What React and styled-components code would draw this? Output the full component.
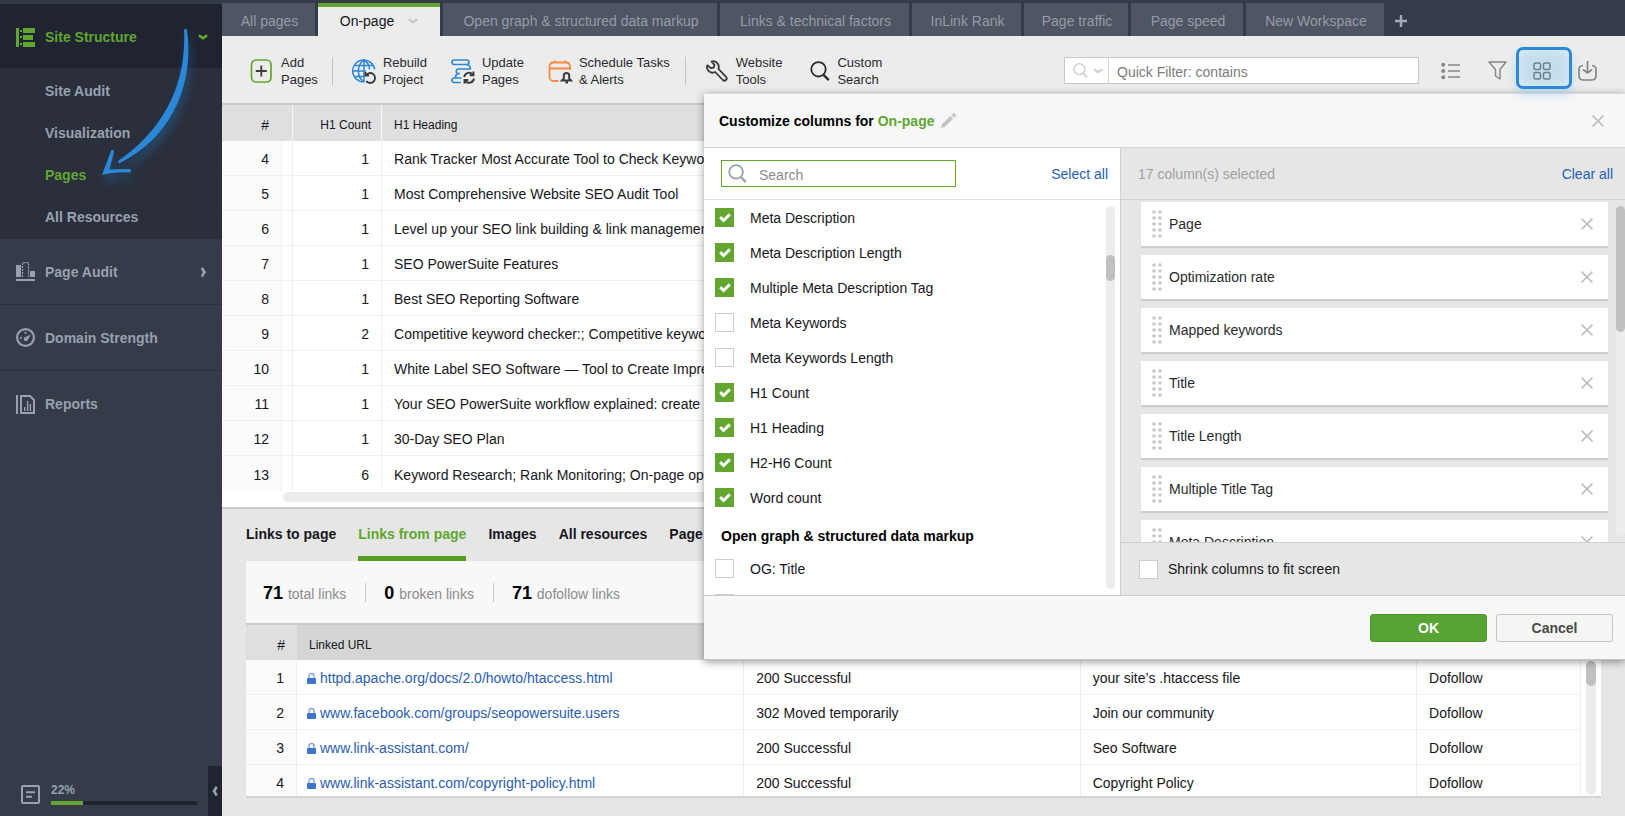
import React, { useState } from 'react';
import styled, { createGlobalStyle, css } from 'styled-components';

const TABS = [
  { label: 'All pages', width: 93 },
  { label: 'On-page', width: 122 },
  { label: 'Open graph & structured data markup', width: 274 },
  { label: 'Links & technical factors', width: 189 },
  { label: 'InLink Rank', width: 109 },
  { label: 'Page traffic', width: 104 },
  { label: 'Page speed', width: 112 },
  { label: 'New Workspace', width: 138 },
];

const PAGES = [
  [4, 1, 'Rank Tracker Most Accurate Tool to Check Keyword'],
  [5, 1, 'Most Comprehensive Website SEO Audit Tool'],
  [6, 1, 'Level up your SEO link building & link management'],
  [7, 1, 'SEO PowerSuite Features'],
  [8, 1, 'Best SEO Reporting Software'],
  [9, 2, 'Competitive keyword checker:; Competitive keyword'],
  [10, 1, 'White Label SEO Software — Tool to Create Impressive'],
  [11, 1, 'Your SEO PowerSuite workflow explained: create'],
  [12, 1, '30-Day SEO Plan'],
  [13, 6, 'Keyword Research; Rank Monitoring; On-page optimization'],
];

const LINKS = [
  ['httpd.apache.org/docs/2.0/howto/htaccess.html', '200 Successful', 'your site’s .htaccess file'],
  ['www.facebook.com/groups/seopowersuite.users', '302 Moved temporarily', 'Join our community'],
  ['www.link-assistant.com/', '200 Successful', 'Seo Software'],
  ['www.link-assistant.com/copyright-policy.html', '200 Successful', 'Copyright Policy'],
];

const COLUMNS = [
  ['Meta Description', true],
  ['Meta Description Length', true],
  ['Multiple Meta Description Tag', true],
  ['Meta Keywords', false],
  ['Meta Keywords Length', false],
  ['H1 Count', true],
  ['H1 Heading', true],
  ['H2-H6 Count', true],
  ['Word count', true],
];

const SELECTED = [
  'Page',
  'Optimization rate',
  'Mapped keywords',
  'Title',
  'Title Length',
  'Multiple Title Tag',
  'Meta Description',
];

/* ---------- icons ---------- */

const StructureIcon = () => (
  <svg width="19" height="19" viewBox="0 0 19 19" fill="currentColor">
    <path d="M0 0h3v19H0zM4 2h2v2H4zM4 8h2v2H4zM4 15h2v2H4zM7 0h12v5H7zM7 7h10v5H7zM7 14h12v5H7z" />
  </svg>
);

const AuditIcon = () => (
  <svg width="19" height="19" viewBox="0 0 19 19" fill="currentColor">
    <path d="M0 3h5v12H0zM14 9h5v6h-5zM0 17h19v2H0z" />
    <path d="M6.5 15V.7h6V15" fill="none" stroke="currentColor" strokeWidth="1.2" strokeDasharray="2 1" />
  </svg>
);

const GaugeIcon = () => (
  <svg width="19" height="19" viewBox="0 0 19 19" fill="currentColor">
    <circle cx="9.5" cy="9.5" r="8.4" fill="none" stroke="currentColor" strokeWidth="2.2" />
    <path d="M15 6.6L11.4 12.4a2.2 2.2 0 0 1-3.2-3z" />
    <circle cx="5" cy="9.8" r="1.1" />
    <circle cx="9.5" cy="4.8" r="1.1" />
  </svg>
);

const ReportIcon = () => (
  <svg width="19" height="19" viewBox="0 0 19 19" fill="none" stroke="currentColor">
    <path d="M1 0v19" strokeWidth="2" />
    <path d="M5 1h9l4 4v13H5z" strokeWidth="2" />
    <path d="M8.7 12v4M11.6 6v10M14.4 9v7" strokeWidth="1.4" />
  </svg>
);

const TaskIcon = () => (
  <svg width="19" height="19" viewBox="0 0 19 19" fill="none" stroke="currentColor" strokeWidth="2">
    <rect x="1" y="1" width="17" height="17" rx="1" />
    <path d="M5 7.2h9M5 11.8h6" />
  </svg>
);

const Chevron = ({ d = 'M.8 1.3Q3.500 2.800 5 4.200 6.500 2.800 9.200 1.300', width = 2.6 }) => (
  <svg width="10" height="10" viewBox="0 -2 10 10" fill="none" stroke="currentColor" strokeWidth={width}>
    <path d={d} />
  </svg>
);

const AddIcon = () => (
  <svg width="24" height="24" viewBox="0 0 24 24" fill="none">
    <rect x="1.5" y="1" width="19.500" height="22" rx="4.5" stroke="#63a62f" strokeWidth="1.700" />
    <path d="M11.3 6.5v11M5.800 12h11" stroke="#3c3c3c" strokeWidth="1.900" />
  </svg>
);

const GlobeIcon = () => (
  <svg width="24" height="24" viewBox="0 0 24 24" fill="none">
    <g stroke="#2b88d8" strokeWidth="1.500">
      <path d="M12 23A11 11 0 1 1 22.6 10.5" />
      <path d="M12 23C4.5 18 4.500 6 12 1c3.800 2.500 5.500 6 5.500 9.500M12 1v22M1.200 12H14M2.800 6.500h18.400M2.800 17.500H12" />
    </g>
    <path d="M13.500 13v3.500H17M13.800 16.400a5 5 0 1 1 .4 5.800" stroke="#3c3c3c" strokeWidth="1.900" />
  </svg>
);

const UpdateIcon = () => (
  <svg width="24" height="24" viewBox="0 0 24 24" fill="none">
    <g stroke="#2b88d8" strokeWidth="1.600">
      <rect x="1" y="1" width="17" height="4.500" rx="2.200" />
      <path d="M16 5.500q3.500 1 3.500 4.500M9 14.500H7.500a2.200 2.200 0 0 1 0-4.500H20M10.500 19H3.200a2.200 2.200 0 0 0 0 4.500H10M7 14.500q-2.500 1-2.500 4" />
    </g>
    <path
      d="M13.200 18a5 5 0 0 1 9-2.200M22.500 12.500v3.800h-3.800M23 19.500a5 5 0 0 1-9 2.200M13.500 24.500V21h3.800"
      stroke="#3c3c3c"
      strokeWidth="1.900"
    />
  </svg>
);

const ScheduleIcon = () => (
  <svg width="24" height="24" viewBox="0 0 24 24" fill="none">
    <path
      d="M10.500 22H5.500A4 4 0 0 1 1.500 18V7A4 4 0 0 1 5.500 3.500h12.500a4 4 0 0 1 4 3.500v4M1.500 9.500H22M6.500 1.500v3M17 1.500v3"
      stroke="#fb8b3d"
      strokeWidth="1.800"
    />
    <path d="M14 21.500l1.800-2v-2.800a2.700 2.700 0 0 1 5.400 0v2.800l1.800 2zM17.500 23.500h2.500" stroke="#3c3c3c" strokeWidth="2" />
  </svg>
);

const WrenchIcon = () => (
  <svg width="23" height="22" viewBox="0 0 23 22" fill="none" stroke="#3c3c3c" strokeWidth="1.800" strokeLinejoin="round">
    <path d="M5.500 1.600A5.600 5.600 0 0 1 12.500 8.800L20 16.800a2.200 2.200 0 0 1-3.200 3.200L9.200 12A5.600 5.600 0 0 1 1.300 5.300L5 8.200l2.800-.6.700-2.700z" />
  </svg>
);

const LensIcon = ({ size = 20, stroke = 1.8 }) => (
  <svg width={size} height={size} viewBox="0 0 20 20" fill="none" stroke="currentColor" strokeWidth={stroke}>
    <circle cx="8.500" cy="8.300" r="7.200" />
    <path d="M13.500 13.800l5.300 5.300" strokeWidth={stroke + 0.6} />
  </svg>
);

const ListIcon = () => (
  <svg width="19" height="18" viewBox="0 0 19 18" fill="none" stroke="currentColor" strokeWidth="1.500">
    <path d="M7 3h12M7 9h12M7 15h12" />
    <g fill="currentColor" stroke="none">
      <circle cx="2.200" cy="2.800" r="2" />
      <circle cx="2.200" cy="9" r="2" />
      <circle cx="2.200" cy="15.200" r="2" />
    </g>
  </svg>
);

const FunnelIcon = () => (
  <svg width="19" height="19" viewBox="0 0 19 19" fill="none" stroke="currentColor" strokeWidth="1.400" strokeLinejoin="round">
    <path d="M1 1h17l-6 7.500V18l-4.500-3V8.500z" />
  </svg>
);

const GridIcon = () => (
  <svg width="18" height="18" viewBox="0 0 18 18" fill="none" stroke="currentColor" strokeWidth="1.500">
    <rect x="1" y="1" width="6.500" height="6.500" rx="1.500" />
    <rect x="10.500" y="1" width="6.500" height="6.500" rx="1.500" />
    <rect x="1" y="10.500" width="6.500" height="6.500" rx="1.500" />
    <rect x="10.500" y="10.500" width="6.500" height="6.500" rx="1.500" />
  </svg>
);

const DownloadIcon = () => (
  <svg width="19" height="20" viewBox="0 0 19 20" fill="none" stroke="currentColor" strokeWidth="1.700">
    <path d="M5 4.500Q1 5 1 8v6.500Q1 19 5.500 19h8q4.500 0 4.500-4.500V8q0-3-4-3.500M9.500 0v11.500M5 8.500l4.500 3.500L14 8.500" />
  </svg>
);

const PencilIcon = () => (
  <svg width="15" height="15" viewBox="0 0 16 16" fill="#c4c4c4">
    <path d="M0 16l1-4L10 3l3 3-9 9zM11 2l1.600-1.600a1.300 1.300 0 0 1 1.800 0l1.200 1.200a1.300 1.300 0 0 1 0 1.800L14 5z" />
  </svg>
);

const CrossIcon = () => (
  <svg width="12" height="12" viewBox="0 0 12 12" fill="none" stroke="#bdbdbd" strokeWidth="1.500">
    <path d="M.6.6l10.800 10.800M11.400.6L.6 11.400" />
  </svg>
);

const LockIcon = () => (
  <svg width="9" height="11" viewBox="0 0 9 11">
    <path d="M2 5V3a2.500 2.500 0 0 1 5 0v2" fill="none" stroke="#7fa5dc" strokeWidth="1.400" />
    <rect y="5" width="9" height="6" rx="1" fill="#3f74c8" />
  </svg>
);

const GripIcon = () => (
  <svg width="10" height="28" viewBox="0 0 10 28" fill="#c6c8c8">
    {[2, 8, 14, 20, 26].map(y => (
      <React.Fragment key={y}>
        <circle cx="2" cy={y} r="1.800" />
        <circle cx="8" cy={y} r="1.800" />
      </React.Fragment>
    ))}
  </svg>
);

/* ---------- building blocks ---------- */

const CheckBox = ({ checked, onChange, name }) => (
  <CheckBoxWrap>
    <CheckInput type="checkbox" checked={checked} onChange={onChange} aria-label={name} />
    {checked && (
      <svg width="12" height="10" viewBox="0 0 12 10" fill="none" stroke="#fff" strokeWidth="3">
        <path d="M1.200 4.200l3.400 3.300L10.800 1.400" />
      </svg>
    )}
  </CheckBoxWrap>
);

const ColumnOption = ({ label, name, initial = false }) => {
  const [checked, setChecked] = useState(initial);
  return (
    <OptionRow>
      <CheckBox checked={checked} name={name} onChange={() => setChecked(!checked)} />
      {label}
    </OptionRow>
  );
};

const CustomizeDialog = () => {
  const [shrink, setShrink] = useState(false);
  return (
    <Dialog role="dialog" aria-label="Customize columns">
      <DialogHeader>
        <DialogTitle>
          Customize columns for <Accent>On-page</Accent>
        </DialogTitle>
        <IconButton aria-label="Rename"><PencilIcon /></IconButton>
        <Spacer />
        <IconButton aria-label="Close"><CrossIcon /></IconButton>
      </DialogHeader>
      <DialogBody>
        <Available>
          <PaneHeader>
            <SearchBox>
              <LensIcon size={19} stroke={1.800} />
              <SearchInput type="text" placeholder="Search" aria-label="Search columns" />
            </SearchBox>
            <TextLink href="#select">Select all</TextLink>
          </PaneHeader>
          <PaneScroll>
            <OptionList>
              {COLUMNS.map(([label, on]) => (
                <ColumnOption key={label} label={label} initial={on} />
              ))}
              <GroupTitle>Open graph &amp; structured data markup</GroupTitle>
              <ColumnOption label="OG: Title" />
              <ColumnOption name="More columns" />
            </OptionList>
            <Track $gap={5}>
              <Thumb $start={49} $length={26} />
            </Track>
          </PaneScroll>
        </Available>
        <Chosen>
          <PaneHeader $muted>
            17 column(s) selected
            <TextLink href="#clear">Clear all</TextLink>
          </PaneHeader>
          <PaneScroll>
            <CardList>
              {SELECTED.map(name => (
                <ColumnCard key={name}>
                  <GripIcon />
                  <CardLabel>{name}</CardLabel>
                  <IconButton aria-label={`Remove ${name}`}><CrossIcon /></IconButton>
                </ColumnCard>
              ))}
            </CardList>
            <Track $gap={0}>
              <Thumb $start={0} $length={126} />
            </Track>
          </PaneScroll>
          <ShrinkRow>
            <CheckBox checked={shrink} onChange={() => setShrink(!shrink)} />
            Shrink columns to fit screen
          </ShrinkRow>
        </Chosen>
      </DialogBody>
      <DialogFooter>
        <DialogButton $primary>OK</DialogButton>
        <DialogButton>Cancel</DialogButton>
      </DialogFooter>
    </Dialog>
  );
};

const Sidebar = () => (
  <SideNav>
    <SideItem href="#structure" $active>
      <StructureIcon />
      Site Structure
      <Spacer />
      <Chevron />
    </SideItem>
    <SubMenu>
      <SubItem href="#audit">Site Audit</SubItem>
      <SubItem href="#visualization">Visualization</SubItem>
      <SubItem href="#pages" $active>Pages</SubItem>
      <SubItem href="#resources">All Resources</SubItem>
    </SubMenu>
    <SideItem href="#page-audit">
      <AuditIcon />
      Page Audit
      <Spacer />
      <Chevron d="M4-1.200Q5 1.500 6.500 3.200 5 4.900 4 7.600" />
    </SideItem>
    <SideItem href="#strength">
      <GaugeIcon />
      Domain Strength
    </SideItem>
    <SideItem href="#reports" $last>
      <ReportIcon />
      Reports
    </SideItem>
    <SideFooter>
      <TaskIcon />
      <Progress>
        22%
        <ProgressTrack>
          <ProgressFill style={{ width: '22%' }} />
        </ProgressTrack>
      </Progress>
      <Collapse aria-label="Collapse sidebar">
        <Chevron d="M6.500-1.200Q5.500 1.500 4 3.200 5.500 4.900 6.500 7.600" />
      </Collapse>
    </SideFooter>
    <Pointer width="130" height="170" viewBox="90 20 130 170" fill="#2b88d8">
      <path d="M184 30Q186 27 187 30C193 70 182 132 119 163.500L118 161C162 131 187 86 184 30z" />
      <path d="M102 175L111 151Q113 148 114 152L109.500 169.500L130 169Q132 171 130 172.500Q114 171.500 102 175z" />
    </Pointer>
  </SideNav>
);

const App = () => (
  <Shell>
    <GlobalStyle />
    <Sidebar />
    <Main>
      <TabBar>
        {TABS.map(tab => (
          <Tab key={tab.label} $width={tab.width} $active={tab.label === 'On-page'}>
            {tab.label}
            {tab.label === 'On-page' && <TabArrow><Chevron width={2} /></TabArrow>}
          </Tab>
        ))}
        <AddTab aria-label="Add workspace">
          <svg width="12" height="12" viewBox="0 0 12 12" stroke="currentColor" strokeWidth="2.400">
            <path d="M6 0v12M0 6h12" />
          </svg>
        </AddTab>
      </TabBar>

      <Toolbar>
        <Tool $space={14}><AddIcon /><span>Add<br />Pages</span></Tool>
        <Divider $space={19} />
        <Tool $space={24}><GlobeIcon /><span>Rebuild<br />Project</span></Tool>
        <Tool $space={24}><UpdateIcon /><span>Update<br />Pages</span></Tool>
        <Tool $space={15}><ScheduleIcon /><span>Schedule Tasks<br />&amp; Alerts</span></Tool>
        <Divider $space={20} />
        <Tool $space={28}><WrenchIcon /><span>Website<br />Tools</span></Tool>
        <Tool $space={28}><LensIcon /><span>Custom<br />Search</span></Tool>
        <Spacer />
        <QuickFilter>
          <FilterMode aria-label="Filter mode">
            <LensIcon size={15} stroke={2} />
            <Chevron width={2} />
          </FilterMode>
          <FilterInput type="text" placeholder="Quick Filter: contains" aria-label="Quick filter" />
        </QuickFilter>
        <ToolIcons>
          <ViewButton aria-label="List view"><ListIcon /></ViewButton>
          <ViewButton aria-label="Filter"><FunnelIcon /></ViewButton>
          <ViewButton aria-label="Customize columns" $highlight><GridIcon /></ViewButton>
          <ViewButton aria-label="Download"><DownloadIcon /></ViewButton>
        </ToolIcons>
      </Toolbar>

      <PagesArea>
        <PagesTable>
          <colgroup>
            <col width="60" />
            <col width="11" />
            <col width="89" />
            <col />
          </colgroup>
          <thead>
            <tr>
              <HeadCell colSpan="2" $align="right" $hash>#</HeadCell>
              <HeadCell $align="right">H1 Count</HeadCell>
              <HeadCell>H1 Heading</HeadCell>
            </tr>
          </thead>
          <tbody>
            {PAGES.map(([n, count, heading]) => (
              <tr key={n}>
                <Cell $align="right" $index>{n}</Cell>
                <Cell />
                <Cell $align="right">{count}</Cell>
                <Cell>{heading}</Cell>
              </tr>
            ))}
          </tbody>
        </PagesTable>
        <HorizontalTrack />
      </PagesArea>

      <Details>
        <DetailTabs>
          <DetailTab>Links to page</DetailTab>
          <DetailTab $active>Links from page</DetailTab>
          <DetailTab>Images</DetailTab>
          <DetailTab>All resources</DetailTab>
          <DetailTab>Page</DetailTab>
        </DetailTabs>
        <DetailCard>
          <Stats>
            <Stat><b>71</b> total links</Stat>
            <Stat><b>0</b> broken links</Stat>
            <Stat><b>71</b> dofollow links</Stat>
          </Stats>
          <LinksArea>
            <LinksTable>
              <colgroup>
                <col width="51" />
                <col width="33.500%" />
                <col width="25.200%" />
                <col width="25.200%" />
                <col />
              </colgroup>
              <thead>
                <tr>
                  <LinkHead $align="right" $hash>#</LinkHead>
                  <LinkHead>Linked URL</LinkHead>
                  <LinkHead />
                  <LinkHead />
                  <LinkHead />
                </tr>
              </thead>
              <tbody>
                {LINKS.map(([url, status, anchor], i) => (
                  <tr key={url}>
                    <LinkCell $align="right" $index>{i + 1}</LinkCell>
                    <LinkCell $tight>
                      <Url href={`#${url}`}><LockIcon />{url}</Url>
                    </LinkCell>
                    <LinkCell>{status}</LinkCell>
                    <LinkCell>{anchor}</LinkCell>
                    <LinkCell>Dofollow</LinkCell>
                  </tr>
                ))}
              </tbody>
            </LinksTable>
            <LinksTrack>
              <Thumb $start={0} $length={25} />
            </LinksTrack>
          </LinksArea>
        </DetailCard>
      </Details>

      <CustomizeDialog />
    </Main>
  </Shell>
);

export default App;

/* ---------- styles ---------- */

const GlobalStyle = createGlobalStyle`
  * {
    box-sizing: border-box;
  }
  body {
    margin: 0;
    font-family: "Liberation Sans", Arial, sans-serif;
    font-size: 14px;
    color: #16161c;
  }
  button, input {
    font: inherit;
    color: inherit;
    margin: 0;
    padding: 0;
    border: none;
    background: none;
  }
  a {
    text-decoration: none;
  }
  svg {
    display: block;
    flex-shrink: 0;
    overflow: visible;
  }
`;

const Shell = styled.div`
  display: flex;
  height: 100vh;
  min-height: 720px;
  overflow: hidden;
`;

const Spacer = styled.div`
  flex: 1;
`;

const IconButton = styled.button`
  display: flex;
`;

const SideNav = styled.nav`
  position: relative;
  display: flex;
  flex-direction: column;
  flex: 0 0 222px;
  padding-top: 4px;
  background: #353b49;
  font-weight: bold;
`;

const SideItem = styled.a`
  display: flex;
  align-items: center;
  gap: 10px;
  height: 66px;
  padding: 0 14px 0 16px;
  color: #97a1af;
  border-bottom: ${props => (props.$last ? 'none' : '1px solid #2a2f3b')};
  ${props => props.$active && css`
    height: 65px;
    padding-top: 2px;
    color: #61a631;
    background: #1f2430;
  `}
`;

const SubMenu = styled.div`
  display: flex;
  flex-direction: column;
  padding: 1px 0;
  background: #2a2f3b;
`;

const SubItem = styled.a`
  padding-left: 45px;
  line-height: 42px;
  color: ${props => (props.$active ? '#61a631' : '#97a1af')};
`;

const SideFooter = styled.div`
  display: flex;
  align-items: flex-end;
  margin-top: auto;
  padding-left: 21px;

  > svg {
    color: #97a1af;
    margin-bottom: 12px;
  }
`;

const Progress = styled.div`
  flex: 1;
  margin: 0 11px 11px;
  font-size: 12px;
  line-height: 18px;
  color: #97a1af;
`;

const ProgressTrack = styled.div`
  height: 4px;
  margin-top: 2px;
  background: #1f2430;
`;

const ProgressFill = styled.div`
  height: 100%;
  background: #61a631;
`;

const Collapse = styled.button`
  display: flex;
  align-items: center;
  justify-content: center;
  width: 14px;
  height: 50px;
  color: #97a1af;
  background: #1f2430;
`;

const Pointer = styled.svg`
  position: absolute;
  top: 20px;
  left: 90px;
  pointer-events: none;
  filter: drop-shadow(2px 7px 4px rgba(30, 130, 210, 0.4));
`;

const Main = styled.main`
  position: relative;
  display: flex;
  flex-direction: column;
  flex: 1;
  min-width: 0;
  background: #e6e6e6;
`;

const TabBar = styled.div`
  display: flex;
  gap: 3px;
  height: 36px;
  padding-top: 3px;
  background: #353b49;
`;

const Tab = styled.button`
  display: flex;
  align-items: center;
  justify-content: center;
  gap: 14px;
  flex: 0 0 ${props => props.$width}px;
  padding: 2px 0 0 2px;
  white-space: nowrap;
  color: #959ca7;
  background: #4e5563;
  ${props => props.$active && css`
    padding: 0 0 2px;
    color: #16161c;
    background: #ececec;
    border-top: 4px solid #63a62f;
  `}
`;

const TabArrow = styled.span`
  color: #c4c4c4;
`;

const AddTab = styled.button`
  display: flex;
  align-items: center;
  padding: 2px 0 0 8px;
  color: #a3abb8;
`;

const Toolbar = styled.div`
  display: flex;
  align-items: center;
  flex: 0 0 69px;
  padding: 2px 28px 0;
  background: #ececec;
  border-bottom: 2px solid #c9c9c9;
`;

const Tool = styled.button`
  display: flex;
  align-items: center;
  gap: 7px;
  margin-right: ${props => props.$space}px;
  font-size: 13px;
  line-height: 17px;
  text-align: left;
  white-space: nowrap;
  color: #2a2a2e;
`;

const Divider = styled.div`
  width: 1px;
  height: 28px;
  margin-right: ${props => props.$space}px;
  background: #c3c3c3;
`;

const QuickFilter = styled.div`
  display: flex;
  width: 355px;
  height: 27px;
  background: #fff;
  border: 1px solid #c8c8c8;
`;

const FilterMode = styled.button`
  display: flex;
  align-items: center;
  gap: 5px;
  padding: 0 5px 0 8px;
  color: #cfcfcf;
  border-right: 1px solid #d4d4d4;
`;

const FilterInput = styled.input`
  flex: 1;
  min-width: 0;
  padding: 2px 0 0 8px;
  outline: none;

  &::placeholder {
    color: #7c7c7c;
    opacity: 1;
  }
`;

const ToolIcons = styled.div`
  display: flex;
  align-items: center;
  margin-left: 22px;
`;

const ViewButton = styled.button`
  display: flex;
  align-items: center;
  justify-content: center;
  height: 42px;
  color: #858585;
  margin-right: 9px;

  &:first-child {
    margin-right: 28px;
  }
  &:last-child {
    margin: 0 0 0 -3px;
  }
  ${props => props.$highlight && css`
    position: relative;
    z-index: 3;
    width: 56px;
    margin-bottom: 5px;
    padding: 5px 4px 0 0;
    color: #6d808d;
    background: #c5deed;
    border: 3px solid #2b88d8;
    border-radius: 7px;
    box-shadow: 0 6px 10px rgba(130, 200, 240, 0.4), inset 0 0 10px #e4ecf1;
  `}
`;

const table = css`
  width: 100%;
  table-layout: fixed;
  border-collapse: separate;
  border-spacing: 0;

  th, td {
    height: 35px;
    padding: 2px 12px 0;
    text-align: left;
    white-space: nowrap;
    overflow: hidden;
  }
  th {
    padding-top: 4px;
  }
`;

const PagesArea = styled.section`
  flex: 0 0 404px;
  overflow: hidden;
  background: #fff;
  border-bottom: 2px solid #cdcdcd;
`;

const PagesTable = styled.table`
  ${table}
  tbody tr:last-child td {
    border-bottom: none;
  }
`;

const HeadCell = styled.th`
  && {
    height: 36px;
    padding-right: ${props => (props.$hash ? 23 : 10)}px;
    text-align: ${props => props.$align || 'left'};
  }
  font-size: ${props => (props.$hash ? 14 : 12)}px;
  font-weight: normal;
  background: #dfdfdf;
  border-right: 1px solid #f6f6f6;
`;

const Cell = styled.td`
  && {
    text-align: ${props => props.$align || 'left'};
  }
  background: ${props => (props.$index ? '#fbfbfb' : '#fff')};
  border-right: 1px solid #efefef;
  border-bottom: 1px solid #efefef;
`;

const HorizontalTrack = styled.div`
  height: 10px;
  margin: 1px 0 0 61px;
  border-radius: 5px;
  background: #ececec;
`;

const Details = styled.section`
  display: flex;
  flex-direction: column;
  flex: 1;
  min-height: 0;
  padding: 0 24px 18px;
`;

const DetailTabs = styled.div`
  display: flex;
  gap: 22px;
  height: 52px;
`;

const DetailTab = styled.button`
  font-weight: bold;
  white-space: nowrap;
  color: ${props => (props.$active ? '#61a631' : '#16161c')};
  border-top: 2px solid transparent;
  border-bottom: 5px solid ${props => (props.$active ? '#559d22' : 'transparent')};
`;

const DetailCard = styled.div`
  display: flex;
  flex-direction: column;
  flex: 1;
  min-height: 0;
  overflow: hidden;
  background: #fff;
  border-bottom: 2px solid #d2d2d2;
`;

const Stats = styled.div`
  display: flex;
  align-items: center;
  flex: 0 0 64px;
  padding-left: 17px;
  background: #f8f8f8;
  border-bottom: 2px solid #cbcbcb;
`;

const Stat = styled.div`
  height: 19px;
  line-height: 20px;
  color: #8c8c8c;

  & + & {
    margin-left: 19px;
    padding-left: 18px;
    border-left: 1px solid #c8c8c8;
  }
  b {
    margin-right: 1px;
    font-size: 18px;
    color: #000;
  }
`;

const LinksArea = styled.div`
  display: flex;
  flex: 1;
  min-height: 0;
`;

const LinksTable = styled.table`
  ${table}
  flex: 1;
  align-self: flex-start;
`;

const LinkHead = styled.th`
  && {
    text-align: ${props => props.$align || 'left'};
  }
  font-size: ${props => (props.$hash ? 14 : 12)}px;
  font-weight: normal;
  background: ${props => (props.$hash ? '#dfdfdf' : '#d5d5d5')};
`;

const LinkCell = styled.td`
  && {
    padding-left: ${props => (props.$tight ? 10 : 12)}px;
    text-align: ${props => props.$align || 'left'};
  }
  background: ${props => (props.$index ? '#fbfbfb' : '#fff')};
  border-right: 1px solid #f0f0f0;
  border-bottom: 1px solid #f0f0f0;
`;

const Url = styled.a`
  display: flex;
  align-items: center;
  gap: 4px;
  color: #2a5db0;
`;

const LinksTrack = styled.div`
  flex: 0 0 10px;
  margin: 36px 5px 1px;
  border-radius: 5px;
  background: #ececec;
`;

const Dialog = styled.div`
  position: absolute;
  top: 93px;
  right: 0;
  z-index: 2;
  width: 921px;
  max-width: 100%;
  background: #f7f7f7;
  border-top: 1px solid #dcdcdc;
  box-shadow: 0 2px 8px rgba(0, 0, 0, 0.4);
`;

const DialogHeader = styled.header`
  display: flex;
  align-items: center;
  gap: 7px;
  height: 54px;
  padding: 0 21px 0 15px;
  border-bottom: 1px solid #d4d4d4;
`;

const DialogTitle = styled.h2`
  margin: 0;
  font-size: 14px;
  color: #000;
`;

const Accent = styled.span`
  color: #61a631;
`;

const DialogBody = styled.div`
  display: flex;
  height: 448px;
  border-bottom: 1px solid #cacaca;
`;

const Available = styled.div`
  display: flex;
  flex-direction: column;
  flex: 0 0 417px;
  background: #fff;
  border-right: 1px solid #cfcfcf;
`;

const Chosen = styled.div`
  display: flex;
  flex-direction: column;
  flex: 1;
  min-width: 0;
  background: #e6e6e6;
`;

const PaneHeader = styled.div`
  display: flex;
  align-items: center;
  justify-content: space-between;
  flex: 0 0 52px;
  padding: 0 12px 0 17px;
  color: #a0a0a0;
  border-bottom: 1px solid ${props => (props.$muted ? '#d0d0d0' : '#e2e2e2')};
`;

const SearchBox = styled.div`
  display: flex;
  align-items: center;
  gap: 12px;
  width: 235px;
  height: 27px;
  padding-left: 6px;
  color: #9aa3ad;
  border: 1px solid #63a62f;
`;

const SearchInput = styled.input`
  flex: 1;
  min-width: 0;
  padding-top: 2px;
  outline: none;

  &::placeholder {
    color: #8c8c8c;
    opacity: 1;
  }
`;

const TextLink = styled.a`
  color: #2460b4;
`;

const PaneScroll = styled.div`
  display: flex;
  flex: 1;
  min-height: 0;
`;

const OptionList = styled.div`
  flex: 1;
  overflow: hidden;
  padding-left: 11px;
`;

const OptionRow = styled.label`
  display: flex;
  align-items: center;
  gap: 16px;
  height: 35px;
`;

const GroupTitle = styled.h3`
  margin: 0 0 0 6px;
  height: 36px;
  font-size: 14px;
  line-height: 42px;
  color: #000;
`;

const CheckBoxWrap = styled.span`
  display: grid;
  place-items: center;
  flex-shrink: 0;

  > * {
    grid-area: 1 / 1;
  }
  svg {
    pointer-events: none;
  }
`;

const CheckInput = styled.input`
  appearance: none;
  width: 19px;
  height: 19px;
  background: #fff;
  border: 1px solid #cdcdcd;

  &:checked {
    background: #63a62f;
    border-color: #63a62f;
  }
`;

const Track = styled.div`
  flex: 0 0 9px;
  margin: 6px ${props => props.$gap}px 6px 8px;
  border-radius: 5px;
  background: #ededed;
`;

const Thumb = styled.div`
  height: ${props => props.$length}px;
  margin-top: ${props => props.$start}px;
  border-radius: 5px;
  background: #bfc1c1;
`;

const CardList = styled.div`
  display: flex;
  flex-direction: column;
  gap: 9px;
  flex: 1;
  overflow: hidden;
  padding: 2px 0 0 20px;
`;

const ColumnCard = styled.div`
  display: flex;
  align-items: center;
  flex: 0 0 44px;
  padding: 0 15px 0 11px;
  background: #fff;
  box-shadow: 0 2px 1px #cdcdcd;
`;

const CardLabel = styled.span`
  flex: 1;
  margin-left: 7px;
  color: #2a2a2e;
`;

const ShrinkRow = styled.label`
  display: flex;
  align-items: center;
  gap: 10px;
  flex: 0 0 53px;
  padding-left: 18px;
  border-top: 1px solid #cfcfcf;
`;

const DialogFooter = styled.footer`
  display: flex;
  align-items: center;
  justify-content: flex-end;
  gap: 9px;
  height: 64px;
  padding-right: 12px;
  border-bottom: 1px solid #c4c4c4;
`;

const DialogButton = styled.button`
  width: 117px;
  height: 28px;
  font-weight: bold;
  color: #4a4a4a;
  background: #f5f5f4;
  border: 1px solid #c6c6c6;
  border-radius: 3px;
  ${props => props.$primary && css`
    color: #fff;
    background: #57a333;
    border-color: #4d952c;
  `}
`;
